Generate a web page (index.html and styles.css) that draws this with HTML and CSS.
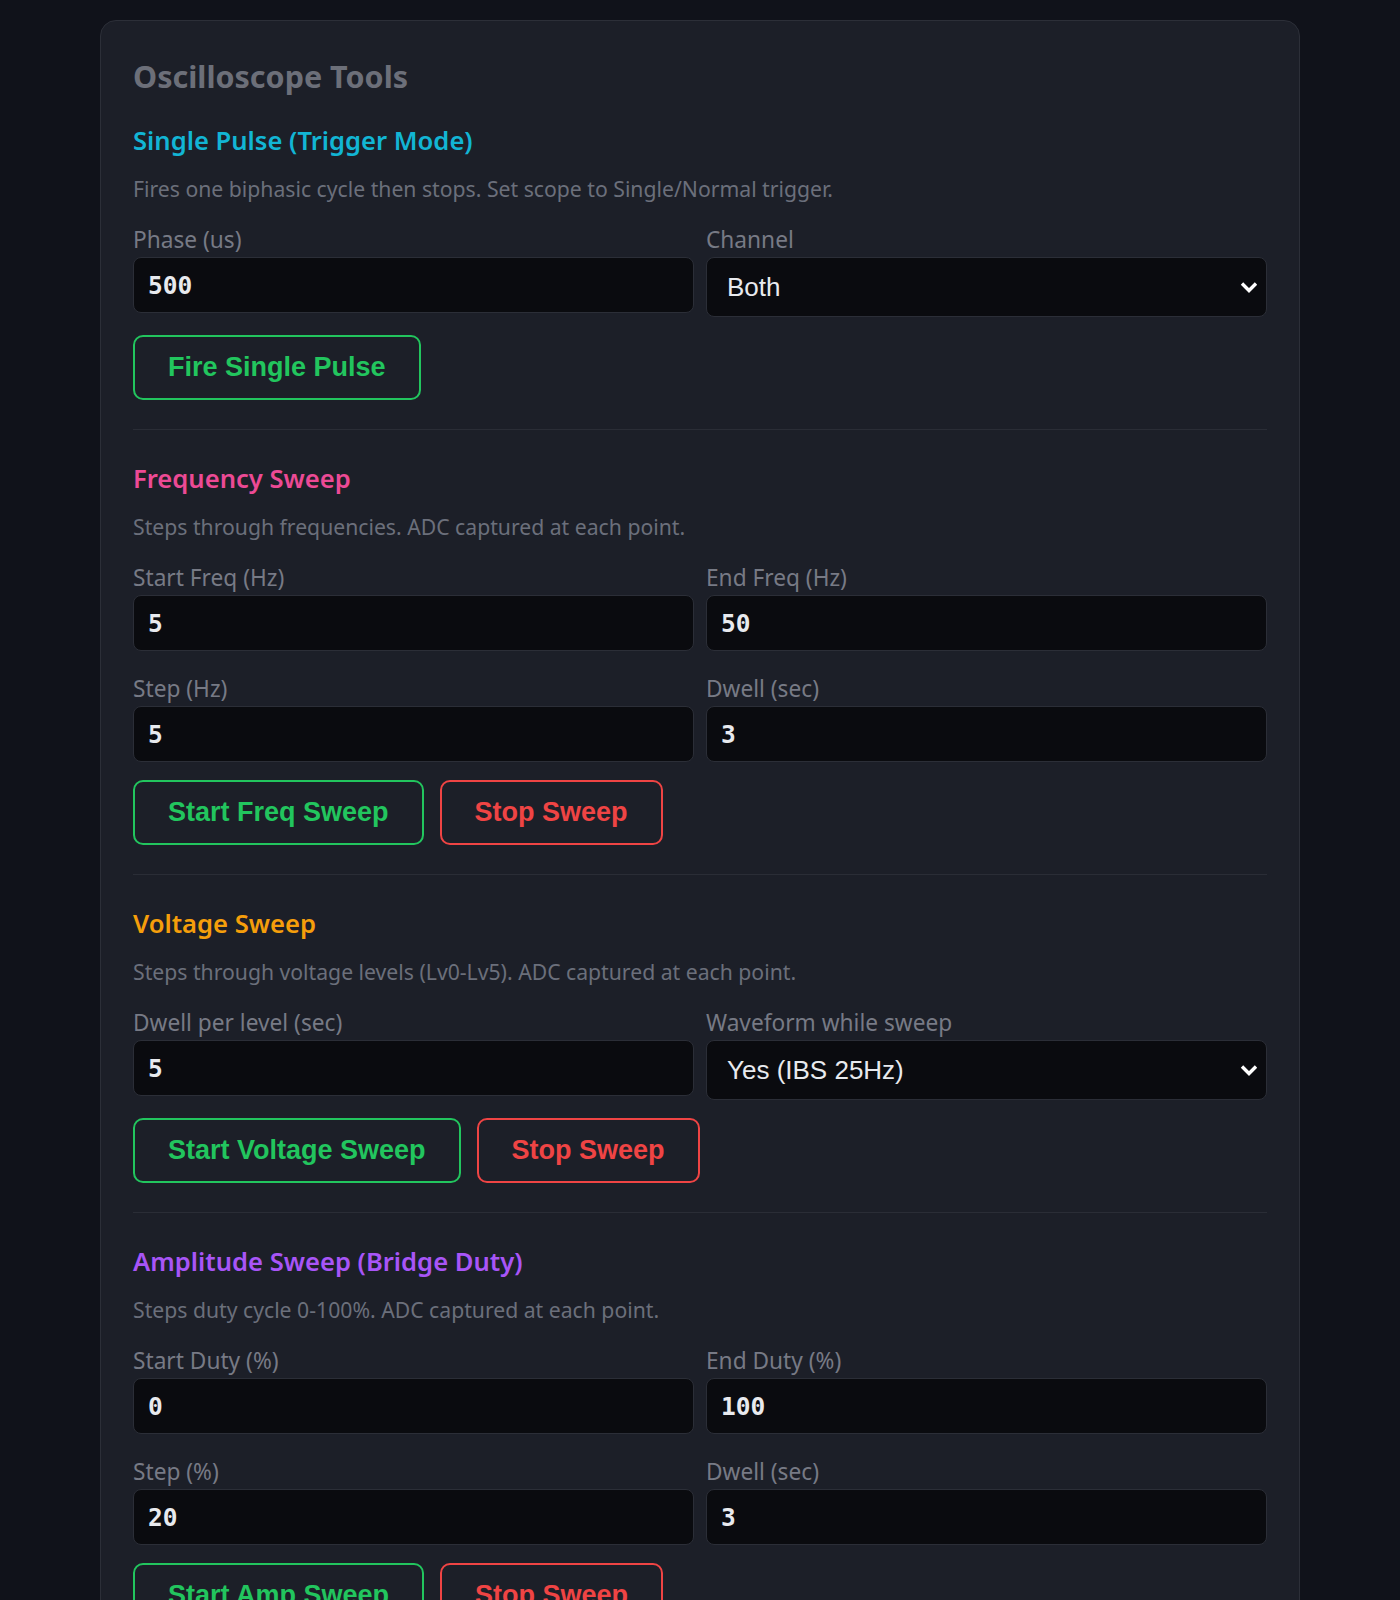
FILE: index.html
```html
<!DOCTYPE html>
<html lang="en">
<head>
  <meta charset="UTF-8">
  <meta name="viewport" content="width=device-width, initial-scale=1.0">
  <title>Oscilloscope Tools</title>
  <link rel="stylesheet" href="styles.css">
</head>
<body>
  <div class="panel">
    <h1 class="panel-title">Oscilloscope Tools</h1>

    <!-- single pulse -->
    <section class="tool">
      <h2 class="tool-title cyan">Single Pulse (Trigger Mode)</h2>
      <p class="tool-desc">Fires one biphasic cycle then stops. Set scope to Single/Normal trigger.</p>
      <div class="fields">
        <div class="field">
          <label for="pulsePhase">Phase (us)</label>
          <input id="pulsePhase" type="number" value="500">
        </div>
        <div class="field">
          <label for="pulseChannel">Channel</label>
          <select id="pulseChannel">
            <option value="both">Both</option>
            <option value="a">Channel A</option>
            <option value="b">Channel B</option>
          </select>
        </div>
      </div>
      <div class="actions">
        <button class="btn btn-go" id="firePulseBtn">Fire Single Pulse</button>
      </div>
    </section>

    <hr class="divider">

    <!-- frequency sweep -->
    <section class="tool">
      <h2 class="tool-title pink">Frequency Sweep</h2>
      <p class="tool-desc">Steps through frequencies. ADC captured at each point.</p>
      <div class="fields">
        <div class="field">
          <label for="freqStart">Start Freq (Hz)</label>
          <input id="freqStart" type="number" value="5">
        </div>
        <div class="field">
          <label for="freqEnd">End Freq (Hz)</label>
          <input id="freqEnd" type="number" value="50">
        </div>
        <div class="field">
          <label for="freqStep">Step (Hz)</label>
          <input id="freqStep" type="number" value="5">
        </div>
        <div class="field">
          <label for="freqDwell">Dwell (sec)</label>
          <input id="freqDwell" type="number" value="3">
        </div>
      </div>
      <div class="actions">
        <button class="btn btn-go" id="freqStartBtn">Start Freq Sweep</button>
        <button class="btn btn-stop" id="freqStopBtn">Stop Sweep</button>
      </div>
    </section>

    <hr class="divider">

    <!-- voltage sweep -->
    <section class="tool">
      <h2 class="tool-title amber">Voltage Sweep</h2>
      <p class="tool-desc">Steps through voltage levels (Lv0-Lv5). ADC captured at each point.</p>
      <div class="fields">
        <div class="field">
          <label for="voltDwell">Dwell per level (sec)</label>
          <input id="voltDwell" type="number" value="5">
        </div>
        <div class="field">
          <label for="voltWave">Waveform while sweep</label>
          <select id="voltWave">
            <option value="ibs">Yes (IBS 25Hz)</option>
            <option value="none">No</option>
          </select>
        </div>
      </div>
      <div class="actions">
        <button class="btn btn-go" id="voltStartBtn">Start Voltage Sweep</button>
        <button class="btn btn-stop" id="voltStopBtn">Stop Sweep</button>
      </div>
    </section>

    <hr class="divider">

    <!-- amplitude sweep -->
    <section class="tool">
      <h2 class="tool-title purple">Amplitude Sweep (Bridge Duty)</h2>
      <p class="tool-desc">Steps duty cycle 0-100%. ADC captured at each point.</p>
      <div class="fields">
        <div class="field">
          <label for="ampStart">Start Duty (%)</label>
          <input id="ampStart" type="number" value="0">
        </div>
        <div class="field">
          <label for="ampEnd">End Duty (%)</label>
          <input id="ampEnd" type="number" value="100">
        </div>
        <div class="field">
          <label for="ampStep">Step (%)</label>
          <input id="ampStep" type="number" value="20">
        </div>
        <div class="field">
          <label for="ampDwell">Dwell (sec)</label>
          <input id="ampDwell" type="number" value="3">
        </div>
      </div>
      <div class="actions">
        <button class="btn btn-go" id="ampStartBtn">Start Amp Sweep</button>
        <button class="btn btn-stop" id="ampStopBtn">Stop Sweep</button>
      </div>
    </section>
  </div>
</body>
</html>
```

FILE: styles.css
```css
body {
  margin: 0;
  padding: 20px 0 40px;
  background-color: #10121a;
  font-family: "Noto Sans", "Open Sans", sans-serif;
}
.panel {
  width: 1200px;
  box-sizing: border-box;
  margin: 0 auto;
  padding: 32px;
  background-color: #1c1f28;
  border: 1px solid #2c2f38;
  border-radius: 16px;
}
.panel-title {
  margin: 3px 0 29px;
  font-size: 30.5px;
  line-height: 40px;
  font-weight: 700;
  color: #6c6f79;
}
.tool-title {
  margin: 0 0 20px;
  font-size: 25.6px;
  line-height: 32px;
  font-weight: 600;
}
.cyan { color: #12b5d4; }
.pink { color: #ec4a95; }
.amber { color: #f59e0b; }
.purple { color: #a855f7; }
.tool-desc {
  margin: 0 0 26px;
  font-size: 21.2px;
  line-height: 24px;
  color: #6b6f7b;
}
.fields {
  display: grid;
  grid-template-columns: 1fr 1fr;
  column-gap: 12px;
  row-gap: 25px;
  align-items: start;
}
.field label {
  display: block;
  margin-bottom: 4px;
  font-size: 22.7px;
  line-height: 26px;
  color: #777a85;
}
.field input,
.field select {
  display: block;
  width: 100%;
  box-sizing: border-box;
  background-color: #0a0b0f;
  border: 1px solid #2b2e37;
  border-radius: 8px;
  color: #e8eaee;
  outline: none;
}
.field input {
  height: 56px;
  padding: 0 14px;
  font-family: "DejaVu Sans Mono", "Liberation Mono", monospace;
  font-size: 24.5px;
  font-weight: 700;
}
.field input::-webkit-inner-spin-button,
.field input::-webkit-outer-spin-button {
  -webkit-appearance: none;
  margin: 0;
}
.field select {
  height: 60px;
  padding: 0 40px 0 20px;
  font-family: "Liberation Sans", Arial, sans-serif;
  font-size: 26px;
  -webkit-appearance: none;
  appearance: none;
  background-image: url("data:image/svg+xml,%3Csvg xmlns='http://www.w3.org/2000/svg' width='18' height='14' viewBox='0 0 18 14'%3E%3Cpath d='M2 3.5l7 7 7-7' fill='none' stroke='%23ffffff' stroke-width='3.4'/%3E%3C/svg%3E");
  background-repeat: no-repeat;
  background-position: right 8px center;
}
.actions {
  display: flex;
  gap: 16px;
  margin-top: 18px;
}
.btn {
  height: 65px;
  padding: 0 33px;
  background: transparent;
  border: 2px solid;
  border-radius: 10px;
  font-family: "Liberation Sans", Arial, sans-serif;
  font-size: 27px;
  font-weight: 700;
  cursor: pointer;
}
.btn-go {
  color: #22c55e;
  border-color: #22c55e;
}
.btn-stop {
  color: #ef4444;
  border-color: #ef4444;
}
.divider {
  margin: 29px 0 33px;
  border: none;
  border-top: 1px solid #2a2d36;
}
```
